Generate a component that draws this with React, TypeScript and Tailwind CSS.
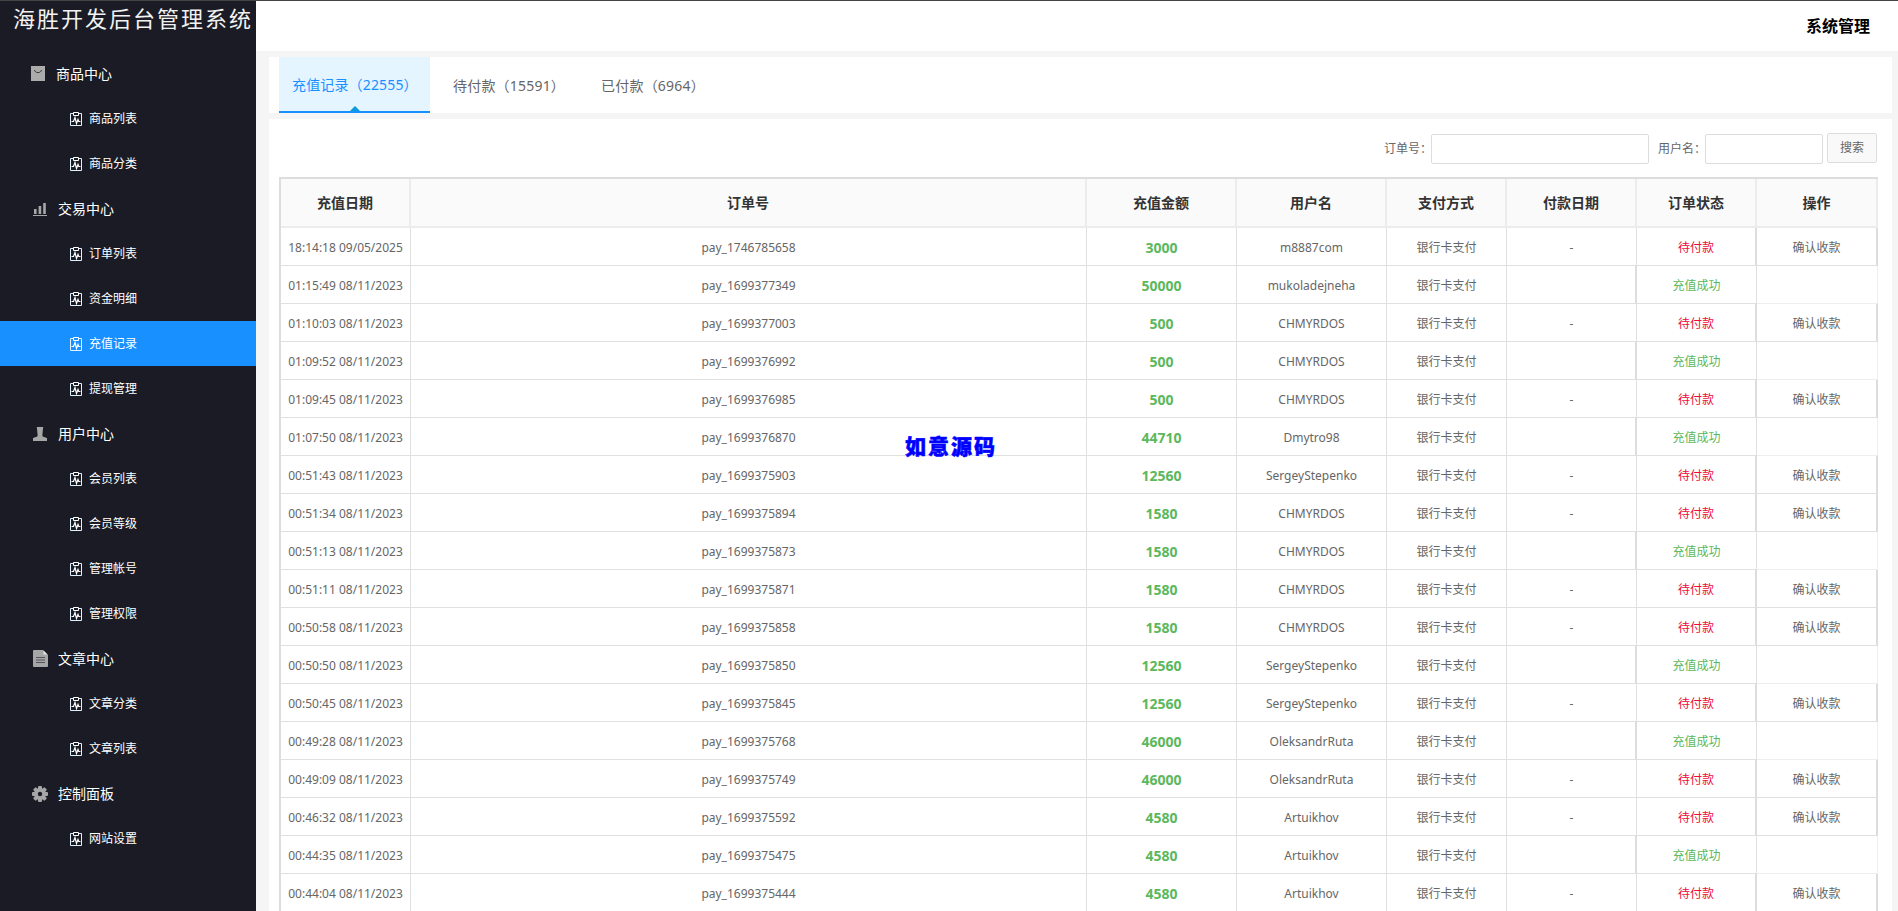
import React from "react";

const FONT = "[font-family:'Noto_Sans','Noto_Sans_CJK_SC',sans-serif]";

function SubIcon() {
  return (
    <svg width="12" height="14" viewBox="0 0 12 14" className="shrink-0" fill="none" stroke="#ffffff" strokeWidth="1">
      <path d="M3.5 1.5H0.5V13.5H11.5V1.5H8.5" stroke="#dff1ff" />
      <path d="M3.5 3.5V0.5H8.5V3.5H3.5Z" />
      <path d="M1.5 9.5H3.5L5 5.5L6.5 11.5L8 7.5L8.8 9.5H10.5" strokeWidth="1.2" />
    </svg>
  );
}

function BagIcon() {
  return (
    <svg width="14" height="15" viewBox="0 0 14 15" className="shrink-0">
      <rect width="14" height="15" fill="#ababab" />
      <path d="M3.5 4C4 7.5 10 7.5 10.5 4" fill="none" stroke="#3a3a3f" strokeWidth="1" />
    </svg>
  );
}

function BarsIcon() {
  return (
    <svg width="14" height="14" viewBox="0 0 14 14" className="shrink-0" fill="#a6a6a6">
      <rect x="1" y="7" width="2.6" height="5" />
      <rect x="5.6" y="4" width="2.6" height="8" />
      <rect x="10.2" y="1" width="2.6" height="11" />
      <rect x="0" y="13" width="14" height="1" />
    </svg>
  );
}

function UserIcon() {
  return (
    <svg width="14" height="14" viewBox="0 0 14 14" className="shrink-0" fill="#a6a6a6">
      <path d="M3.8 0H10.2L9.4 7.5L9.6 9.5L14 11V14H0V11L4.4 9.5L4.6 7.5Z" />
    </svg>
  );
}

function DocIcon() {
  return (
    <svg width="15" height="17" viewBox="0 0 15 17" className="shrink-0">
      <path d="M1 0H10L15 5V16Q15 17 14 17H1Q0 17 0 16V1Q0 0 1 0Z" fill="#a6a6a6" />
      <path d="M10.5 0.5L14.5 4.5H10.5Z" fill="#e4e4e4" />
      <path d="M3 7.5H12M3 10H12M3 12.5H12" stroke="#54545a" strokeWidth="1.2" />
    </svg>
  );
}

function GearIcon() {
  return (
    <svg width="16" height="16" viewBox="0 0 16 16" className="shrink-0">
      <g fill="#a6a6a6">
        <circle cx="8" cy="8" r="6" />
        <rect x="6" y="0" width="4" height="16" rx="1" />
        <rect x="0" y="6" width="16" height="4" rx="1" />
        <rect x="6" y="0" width="4" height="16" rx="1" transform="rotate(45 8 8)" />
        <rect x="6" y="0" width="4" height="16" rx="1" transform="rotate(-45 8 8)" />
      </g>
      <circle cx="8" cy="8" r="2.2" fill="#1a1b25" />
    </svg>
  );
}

function Group({ icon, label, first }: { icon: React.ReactNode; label: string; first?: boolean }) {
  return (
    <div className={`flex h-[45px] items-center gap-[11px] text-[14px] text-white ${first ? "pl-[31px]" : "pl-[33px]"}`}>
      <span className="flex w-[14px] justify-center">{icon}</span>
      <span>{label}</span>
    </div>
  );
}

function Sub({ label, active }: { label: string; active?: boolean }) {
  return (
    <div className={`flex h-[45px] items-center gap-[7px] pl-[70px] text-[12px] text-white ${active ? "bg-[#1890ff]" : ""}`}>
      <SubIcon />
      <span>{label}</span>
    </div>
  );
}

type Row = [string, string, string, string, boolean];

const rows: Row[] = [
  ["18:14:18 09/05/2025", "pay_1746785658", "3000", "m8887com", false],
  ["01:15:49 08/11/2023", "pay_1699377349", "50000", "mukoladejneha", true],
  ["01:10:03 08/11/2023", "pay_1699377003", "500", "CHMYRDOS", false],
  ["01:09:52 08/11/2023", "pay_1699376992", "500", "CHMYRDOS", true],
  ["01:09:45 08/11/2023", "pay_1699376985", "500", "CHMYRDOS", false],
  ["01:07:50 08/11/2023", "pay_1699376870", "44710", "Dmytro98", true],
  ["00:51:43 08/11/2023", "pay_1699375903", "12560", "SergeyStepenko", false],
  ["00:51:34 08/11/2023", "pay_1699375894", "1580", "CHMYRDOS", false],
  ["00:51:13 08/11/2023", "pay_1699375873", "1580", "CHMYRDOS", true],
  ["00:51:11 08/11/2023", "pay_1699375871", "1580", "CHMYRDOS", false],
  ["00:50:58 08/11/2023", "pay_1699375858", "1580", "CHMYRDOS", false],
  ["00:50:50 08/11/2023", "pay_1699375850", "12560", "SergeyStepenko", true],
  ["00:50:45 08/11/2023", "pay_1699375845", "12560", "SergeyStepenko", false],
  ["00:49:28 08/11/2023", "pay_1699375768", "46000", "OleksandrRuta", true],
  ["00:49:09 08/11/2023", "pay_1699375749", "46000", "OleksandrRuta", false],
  ["00:46:32 08/11/2023", "pay_1699375592", "4580", "Artuikhov", false],
  ["00:44:35 08/11/2023", "pay_1699375475", "4580", "Artuikhov", true],
  ["00:44:04 08/11/2023", "pay_1699375444", "4580", "Artuikhov", false],
];

const widths = [130, 676, 150, 150, 120, 130, 120, 121];
const heads = ["充值日期", "订单号", "充值金额", "用户名", "支付方式", "付款日期", "订单状态", "操作"];

const td = "h-[38px] border-r border-b border-[#e0e0e0] text-center align-middle p-0 pt-[2px]";

export default function App() {
  return (
    <div className={`${FONT} flex h-[911px] w-[1898px] overflow-hidden border-t border-[#444444] bg-[#f5f5f5] relative`}>
      <aside className="w-[256px] shrink-0 bg-[#1a1b25]">
        <div className="h-[50px] pl-[13px] pt-[1px] text-[22px] leading-[32px] tracking-[2px] text-[#f2f2f2] whitespace-nowrap">
          海胜开发后台管理系统
        </div>
        <Group first icon={<BagIcon />} label="商品中心" />
        <Sub label="商品列表" />
        <Sub label="商品分类" />
        <Group icon={<BarsIcon />} label="交易中心" />
        <Sub label="订单列表" />
        <Sub label="资金明细" />
        <Sub label="充值记录" active />
        <Sub label="提现管理" />
        <Group icon={<UserIcon />} label="用户中心" />
        <Sub label="会员列表" />
        <Sub label="会员等级" />
        <Sub label="管理帐号" />
        <Sub label="管理权限" />
        <Group icon={<DocIcon />} label="文章中心" />
        <Sub label="文章分类" />
        <Sub label="文章列表" />
        <Group icon={<GearIcon />} label="控制面板" />
        <Sub label="网站设置" />
      </aside>

      <main className="flex min-w-0 flex-1 flex-col">
        <header className="flex h-[50px] shrink-0 items-center justify-end bg-white pr-[28px] text-[16px] font-bold text-black">
          系统管理
        </header>

        <div className="flex flex-col gap-[6px] pl-[13px] pr-[6px] pt-[6px]">
          <div className="flex h-[56px] bg-white pl-[10px]">
            <div className="relative flex w-[151px] items-center border-b-2 border-[#1890ff] bg-[#e4f5ff] pl-[13px] text-[14px] tracking-[0.15px] text-[#1890ff]">
              充值记录（22555）
              <span className="absolute bottom-0 left-[71px] h-0 w-0 border-x-[5px] border-b-[5px] border-x-transparent border-b-[#0a9bd8]" />
            </div>
            <div className="flex items-center pl-[23px] pr-[13px] text-[14px] tracking-[0.2px] text-[#666666]">待付款（15591）</div>
            <div className="flex items-center pl-[23px] text-[14px] tracking-[0.2px] text-[#666666]">已付款（6964）</div>
          </div>

          <div className="bg-white pl-[10px] pr-[15px]">
            <div className="flex h-[58px] items-start justify-end pt-[15px] text-[12px] text-[#666666]">
              <span className="flex h-[30px] items-center">订单号：</span>
              <span className="ml-[-1px] h-[30px] w-[218px] rounded-[2px] border border-[#dddddd] bg-white" />
              <span className="ml-[9px] flex h-[30px] items-center">用户名：</span>
              <span className="ml-[-1px] h-[30px] w-[118px] rounded-[2px] border border-[#dddddd] bg-white" />
              <button className="ml-[4px] mt-[-1px] h-[30px] w-[50px] rounded-[2px] border border-[#dddddd] bg-[#f9f9f9] text-[12px] text-[#666666]">
                搜索
              </button>
            </div>

            <table className="w-[1597px] table-fixed border-separate border-spacing-0 border-t-2 border-l-2 border-[#dddddd] text-[12px] text-[#666666]">
              <colgroup>
                {widths.map((w, i) => (
                  <col key={i} style={{ width: w }} />
                ))}
              </colgroup>
              <thead>
                <tr>
                  {heads.map((h) => (
                    <th
                      key={h}
                      className="h-[49px] border-r-2 border-b-2 border-[#ececec] bg-[#fafafa] p-0 text-center text-[14px] font-bold text-[#333333]"
                    >
                      {h}
                    </th>
                  ))}
                </tr>
              </thead>
              <tbody>
                {rows.map((r) => {
                  const paid = r[4];
                  return (
                    <tr key={r[1]}>
                      <td className={td}>{r[0]}</td>
                      <td className={td}>{r[1]}</td>
                      <td className={`${td} text-[14px] font-bold text-[#5cb85c]`}>{r[2]}</td>
                      <td className={td}>{r[3]}</td>
                      <td className={td}>银行卡支付</td>
                      <td className={paid ? `${td} border-r-2 border-r-[#dddddd]` : td}>{paid ? "" : "-"}</td>
                      {paid ? (
                        <td className={`${td} text-[#5cb85c]`}>充值成功</td>
                      ) : (
                        <td className={`${td} border-r-2 border-r-[#dddddd] text-[#ee0a3c]`}>待付款</td>
                      )}
                      {paid ? (
                        <td className="h-[38px] border-r border-b border-[#eeeeee] p-0" />
                      ) : (
                        <td className={`${td} border-r-2 border-r-[#dddddd]`}>确认收款</td>
                      )}
                    </tr>
                  );
                })}
              </tbody>
            </table>
          </div>
        </div>
      </main>

      <div className="absolute left-[905px] top-[431px] whitespace-nowrap text-[21px] font-black leading-[28px] tracking-[2px] text-[#0000ff] [-webkit-text-stroke:0.5px_#0000ff]">
        如意源码
      </div>
    </div>
  );
}
